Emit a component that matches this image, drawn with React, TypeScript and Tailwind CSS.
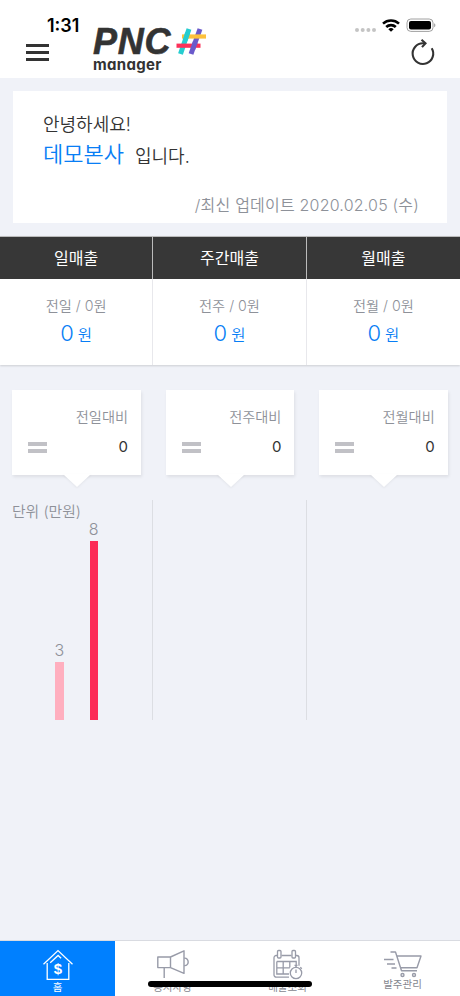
import React from 'react';

const summary = [
    { title: "일매출", prev: "전일 / 0원", value: "0" },
    { title: "주간매출", prev: "전주 / 0원", value: "0" },
    { title: "월매출", prev: "전월 / 0원", value: "0" },
];

const compare = [
    { label: "전일대비", value: "0" },
    { label: "전주대비", value: "0" },
    { label: "전월대비", value: "0" },
];

const bars = [
    { value: 3, height: 58, color: "bg-[#ffafbf]" },
    { value: 8, height: 179.5, color: "bg-[#fc2c57]" },
];

function Logo() {
    return (
        <div className="flex h-[52px] w-[118px] flex-col text-[#333]">
            <div className="flex h-[33px] items-start">
                <span className="mt-[4px] w-[83px] pl-[1px] font-['Liberation_Sans',sans-serif] text-[36px] leading-[30px] font-bold tracking-[0.8px] italic [-webkit-text-stroke:0.6px_#333]">PNC</span>
                <svg width="32" height="28" viewBox="0 0 32 28" fill="none" strokeWidth="5" className="mt-[4.5px] -ml-px block">
                    <path d="M15 1 6.5 26" stroke="#25cdd0" />
                    <path d="M26 1 17 26" stroke="#6a5acb" />
                    <path d="M8 8.5h24" stroke="#fdc13c" strokeWidth="4.2" />
                    <path d="M2.5 17.7h24" stroke="#fb3159" strokeWidth="4.2" />
                    <path d="m13.6 5-2.4 7" stroke="#25cdd0" />
                    <path d="m21.3 14-2.5 7" stroke="#6a5acb" />
                </svg>
            </div>
            <span className="mt-[2px] pl-[1px] font-['Inter',sans-serif] text-[15px] leading-[14px] font-bold tracking-[0.3px] [font-feature-settings:'cv11']">manager</span>
        </div>
    );
}

function StatusIcons() {
    return (
        <svg width="84" height="16" viewBox="0 0 84 16" className="-mr-[2px] block">
            <g fill="#c4c4c4">
                <circle cx="3" cy="12" r="2" />
                <circle cx="8.7" cy="12" r="2" />
                <circle cx="14.4" cy="12" r="2" />
                <circle cx="20" cy="12" r="2" />
            </g>
            <g fill="none" stroke="#000" strokeWidth="2.6">
                <path d="M29 5.6a12 12 0 0 1 16 0" />
                <path d="M32.2 9a7 7 0 0 1 9.6 0" />
            </g>
            <path d="M34.3 11.2a4 4 0 0 1 5.4 0L37 13.8z" />
            <rect x="53" y="1" width="26" height="12.4" rx="3.8" fill="none" stroke="#a0a0a0" />
            <rect x="55" y="3" width="22" height="8.4" rx="2" />
            <path d="M80.2 5.2v4c1.6-.6 1.6-3.4 0-4z" fill="#999" />
        </svg>
    );
}

function HomeIcon() {
    return (
        <svg width="32" height="32" viewBox="0 0 32 32" fill="none" stroke="#fff" strokeWidth="1.3" className="block">
            <path d="M1.5 15.2 16 1.6l14.5 13.6M5.2 14v16.4h21.6V14" />
            <path d="m8.2 13.8 7.9-7.3 3 2.8" />
            <text x="16" y="25.2" textAnchor="middle" fontFamily="Liberation Sans, sans-serif" fontSize="15" fontWeight="700" fill="#fff" stroke="none">$</text>
        </svg>
    );
}

function NoticeIcon() {
    return (
        <svg width="34" height="30" viewBox="0 0 34 30" fill="none" stroke="#989ba8" strokeWidth="1.4" strokeLinejoin="round" className="block">
            <path d="M1.8 8h12.7v10.6H1.8zM14.5 8 28 1.8v22.6l-13.5-5.8M8.2 18.6v10.5" />
            <path d="M28.2 9.2c5.3-.6 5.3 8 0 7.4" />
        </svg>
    );
}

function SalesIcon() {
    return (
        <svg width="32" height="32" viewBox="0 0 32 32" fill="none" stroke="#989ba8" strokeWidth="1.3" className="block">
            <path d="M5 6.5H4.2a2.2 2.2 0 0 0-2.2 2.2V26a2.2 2.2 0 0 0 2.2 2.2H17M9.5 6.5h10M24 6.5h.8A2.2 2.2 0 0 1 27 8.7v8" />
            <rect x="5.5" y="1.5" width="3.5" height="7.5" rx="1" />
            <rect x="20" y="1.5" width="3.5" height="7.5" rx="1" />
            <path d="M4.8 12.5h19.4v5M17 25H4.8V12.5M4.8 18.8h13M11.2 12.5V25M17.8 12.5v6" />
            <circle cx="24" cy="24" r="5.7" fill="#fff" />
            <path d="M24 18.3v-2M22.5 16.3h3M24 20.5V24M28.3 18.2l1.5 1.5" />
        </svg>
    );
}

function OrderIcon() {
    return (
        <svg width="40" height="28" viewBox="0 0 40 28" fill="none" stroke="#989ba8" strokeWidth="1.4" strokeLinejoin="round" className="block">
            <path d="M7.5 2h5l6 18.8H34M14 6h24l-4 11.8H17.5" />
            <path d="M1 9.5h9.5M4 14h8M8.5 18h5" />
            <circle cx="19.5" cy="25" r="1.5" />
            <circle cx="31" cy="25" r="1.5" />
        </svg>
    );
}

export default function App() {
    return (
        <div className="relative flex h-[996px] w-[460px] flex-col overflow-hidden bg-[#f0f2f8] font-['Inter','Noto_Sans_CJK_KR',sans-serif] text-[#333]">
            <header className="flex h-[78px] shrink-0 bg-white">
                <div className="w-[92px] pt-[16px]">
                    <div className="pl-[47px] text-[18px] leading-[20px] font-semibold text-black">1:31</div>
                    <div className="mt-[8px] ml-[26px] flex w-[23px] flex-col gap-[4.5px]">
                        <span className="h-[2.5px] bg-[#333]" />
                        <span className="h-[2.5px] bg-[#333]" />
                        <span className="h-[2.5px] bg-[#333]" />
                    </div>
                </div>
                <div className="pt-[23px]"><Logo /></div>
                <div className="ml-auto flex flex-col items-end pt-[18px] pr-[24px]">
                    <StatusIcons />
                    <svg width="26" height="28" viewBox="0 0 26 28" fill="none" stroke="#333" strokeWidth="2.1" className="mt-[5px] block">
                        <path d="M15 4.3h-2a10.3 10.3 0 1 0 8.7 4.9" />
                        <path d="m11.500 .8 4 3.500-3.500 3.800" />
                    </svg>
                </div>
            </header>

            <section className="mx-[13px] mt-[13px] h-[132px] shrink-0 bg-white pt-[21px] pr-[28px] pl-[30px]">
                <p className="text-[18px] leading-[26px] font-[350]">안녕하세요!</p>
                <p className="flex h-[34px] items-start font-[350]">
                    <span className="text-[22px] leading-[32px] text-[#087ef5]">데모본사</span>
                    <span className="ml-[11px] text-[18px] leading-[38px]">입니다.</span>
                </p>
                <p className="mt-[21px] text-right text-[16px] leading-[24px] font-[350] tracking-[0.2px] text-[#8d9199]">/최신 업데이트 2020.02.05 (수)</p>
            </section>

            <section className="mt-[13px] grid h-[129px] shrink-0 grid-cols-3 border-t border-[#bbb] bg-white shadow-[0_1px_2px_rgba(0,0,0,0.15)]">
                {summary.map((item, i) => (
                    <div key={i} className="border-r border-[#e8e8ec] text-center last:border-r-0">
                        <h2 className="-mr-px h-[42px] border-r border-[#bbb] bg-[#373737] text-[16px] leading-[43px] text-white">{item.title}</h2>
                        <p className="mt-[16px] text-[14.2px] leading-[22px] font-[350] text-[#8e9199]">{item.prev}</p>
                        <p className="text-[22px] leading-[32px] font-[350] text-[#087ef5]">{item.value}<span className="ml-[4px] text-[15.5px]">원</span></p>
                    </div>
                ))}
            </section>

            <section className="mt-[25px] grid h-[85px] shrink-0 grid-cols-3">
                {compare.map((item, i) => (
                    <div key={i} className="relative mx-[12.3px] bg-white pt-[16px] pr-[13px] pl-[16px] shadow-[1px_2px_3px_rgba(0,0,0,0.08)]">
                        <p className="text-right text-[14.2px] leading-[22px] font-[350] text-[#8e9199]">{item.label}</p>
                        <div className="mt-[7px] flex items-center justify-between">
                            <div className="flex w-[19px] flex-col gap-[3px]">
                                <span className="h-[4px] bg-[#c1c1c6]" />
                                <span className="h-[4px] bg-[#c1c1c6]" />
                            </div>
                            <span className="text-[15px] leading-[24px]">{item.value}</span>
                        </div>
                        <svg width="28" height="14" viewBox="0 0 28 14" className="absolute -bottom-[13px] left-[51px] drop-shadow-[0_1px_1px_rgba(0,0,0,0.06)]">
                            <path d="M0 0h28L14 13z" fill="#fff" />
                        </svg>
                    </div>
                ))}
            </section>

            <section className="mt-[25px] grid h-[220px] shrink-0 grid-cols-3">
                <div className="flex h-[220px] flex-col border-r border-[#dcdee3]">
                    <p className="h-[17px] pl-[12px] text-[14.8px] leading-[25px] font-[350] whitespace-nowrap text-[#8e9199]">단위 (만원)</p>
                    <div className="flex flex-1 items-end gap-[26px] pl-[55px]">
                        {bars.map((bar) => (
                            <div key={bar.value} className="flex w-[8.5px] flex-col items-center">
                                <span className="text-[16px] leading-[23px] font-[350] text-[#8e9199]">{bar.value}</span>
                                <span className={`w-full ${bar.color}`} style={{ height: bar.height }} />
                            </div>
                        ))}
                    </div>
                </div>
                <div className="border-r border-[#dcdee3]" />
                <div />
            </section>

            <nav className="mt-auto grid h-[56px] shrink-0 grid-cols-4 border-t border-[#d9dbe1] bg-white text-[10.5px] leading-[14px] text-[#85878f]">
                <div className="flex flex-col items-center bg-[#0080ff] pt-[8px] text-white">
                    <HomeIcon />
                    <span>홈</span>
                </div>
                <div className="flex flex-col items-center pt-[8px]">
                    <NoticeIcon />
                    <span className="mt-[2px]">공지사항</span>
                </div>
                <div className="flex flex-col items-center pt-[8px]">
                    <SalesIcon />
                    <span>매출조회</span>
                </div>
                <div className="flex flex-col items-center pt-[9px]">
                    <OrderIcon />
                    <span>발주관리</span>
                </div>
            </nav>
            {/* home indicator */}
            <div className="absolute bottom-[9px] left-[148px] h-[6px] w-[164px] rounded-full bg-black" />
        </div>
    );
}
